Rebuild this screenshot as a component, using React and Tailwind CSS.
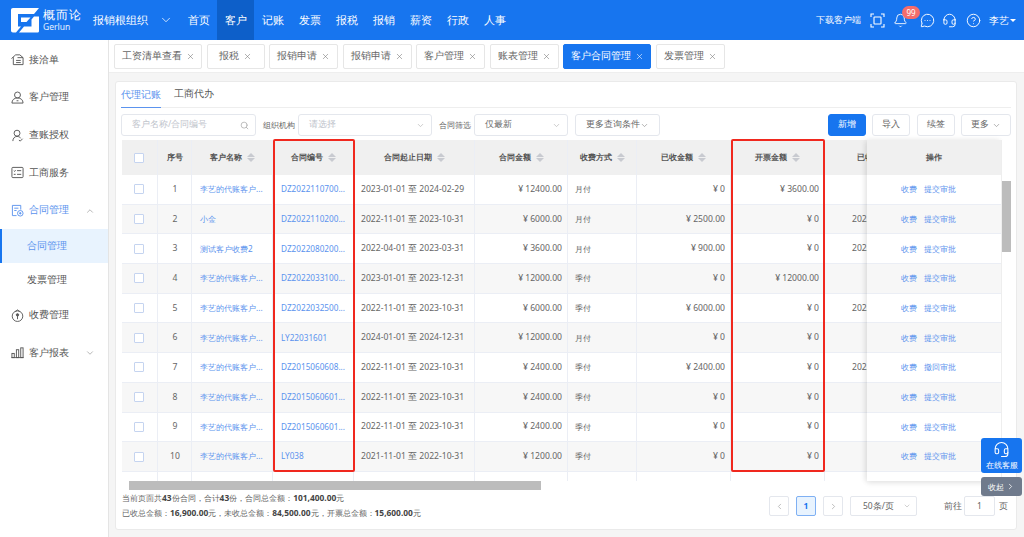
import React from "react";
import { X, ChevronDown, ChevronUp, ChevronLeft, ChevronRight, Search, Bell, Headset, CircleHelp, MessageCircleMore } from "lucide-react";

const FONT = "font-['Open_Sans','Noto_Sans_CJK_SC',sans-serif]";

function Logo() {
  return (
    <svg width="28" height="25" viewBox="0 0 28 25" className="shrink-0">
      <path d="M2 0H28L23 6H7V18.5H10L5 24.5H2C0.8 24.5 0 23.7 0 22.5V2C0 0.8 0.8 0 2 0Z" fill="#fff" />
      <path d="M10 9.5H19.5L15.5 14H10Z" fill="#fff" />
      <path d="M23 8.5H28V23C28 24 27.2 24.6 26.4 24.6H8L13 18.5H20.5V11.5Z" fill="#fff" />
    </svg>
  );
}

function ScanIcon() {
  return (
    <svg width="15" height="15" viewBox="0 0 15 15" fill="none" stroke="#fff" strokeWidth="1.1" className="shrink-0">
      <path d="M1 4V1H4M11 1H14V4M14 11V14H11M4 14H1V11" />
      <rect x="4" y="4" width="7" height="7" rx="0.6" />
    </svg>
  );
}

function TopNav() {
  const items = ["首页", "客户", "记账", "发票", "报税", "报销", "薪资", "行政", "人事"];
  return (
    <header className="h-10 bg-[#1775ef] flex items-center text-white shrink-0">
      <div className="w-[93px] pl-[11px] flex items-center gap-[4px] shrink-0">
        <Logo />
        <div className="flex flex-col leading-none">
          <span className="text-[12px] leading-[14px] tracking-[1px] whitespace-nowrap">概而论</span>
          <span className="text-[8.5px] leading-[10px] text-white/90">Gerlun</span>
        </div>
      </div>
      <span className="text-[11px] w-[54px] whitespace-nowrap">报销根组织</span>
      <ChevronDown className="w-[14px] h-[14px] ml-[12px] mr-[7px] shrink-0" strokeWidth={1.3} />
      <nav className="flex h-full">
        {items.map((t) => (
          <div key={t} className={`w-[37px] h-full flex items-center justify-center text-[11px] ${t === "客户" ? "bg-[#0d5fc9]" : ""}`}>
            {t}
          </div>
        ))}
      </nav>
      <div className="ml-auto flex items-center pr-[8px] mt-[1px]">
        <span className="text-[9.4px] mr-[9px] whitespace-nowrap">下载客户端</span>
        <ScanIcon />
        <div className="relative ml-[8px]">
          <Bell className="w-[15px] h-[15px]" strokeWidth={1.4} />
          <span className="absolute -top-[7px] left-[9px] w-[18px] h-[13px] rounded-full bg-[#f56c6c] text-[8px] leading-[13px] text-center">99</span>
        </div>
        <MessageCircleMore className="w-[15px] h-[15px] ml-[12px]" strokeWidth={1.5} />
        <Headset className="w-[15px] h-[15px] ml-[7px]" strokeWidth={1.5} />
        <CircleHelp className="w-[15px] h-[15px] ml-[9px]" strokeWidth={1.5} />
        <span className="text-[10px] ml-[8px] whitespace-nowrap">李艺</span>
        <span className="ml-[1px] w-0 h-0 border-x-[3px] border-x-transparent border-t-[3px] border-t-white" />
      </div>
    </header>
  );
}

function SideIcon({ kind, active }) {
  const c = active ? "#5b93ee" : "#555";
  const common = { width: 13, height: 13, viewBox: "0 0 14 14", fill: "none", stroke: c, strokeWidth: 1, className: "shrink-0" };
  if (kind === "home")
    return (
      <svg {...common}><path d="M0.5 6L5 2H9.5L13 5" /><path d="M2.5 4.5V12.5H13V5H7" /><path d="M5.5 8H10.5M5.5 10.3H10.5" /></svg>
    );
  if (kind === "user")
    return (
      <svg {...common}><circle cx="7" cy="4.3" r="3.2" /><path d="M1 13C1 9.5 3.5 7.5 7 7.5S13 9.5 13 13Z" /><path d="M6 10.5H8" /></svg>
    );
  if (kind === "auth")
    return (
      <svg {...common}><circle cx="6.5" cy="4.5" r="3.2" /><path d="M2 13C2 10 4 8 6.5 8C8.5 8 10 9 10.5 10" /><path d="M8.5 12L10 13L12.5 10.5" /></svg>
    );
  if (kind === "biz")
    return (
      <svg {...common}><rect x="1" y="1.5" width="12" height="11" rx="1" /><path d="M6.5 5H11M6.5 9H11" /><path d="M3 5L4 5.8L5 4.6M3 9H5" /></svg>
    );
  if (kind === "contract")
    return (
      <svg {...common}><path d="M10.5 6V1.5H1.5V12.5H6" /><path d="M3.5 4.5H8M3.5 7H6" /><circle cx="10" cy="10" r="3" /><circle cx="10" cy="10" r="0.8" fill={c} /></svg>
    );
  if (kind === "fee")
    return (
      <svg {...common}><circle cx="7" cy="7.7" r="5.7" /><path d="M4.5 3L7 1L9.5 3" /><circle cx="7" cy="6.3" r="1.3" fill={c} /><path d="M7 7.5V11" /></svg>
    );
  return (
    <svg {...common}><path d="M0.5 12.5H13.5" /><rect x="1" y="8" width="2.5" height="4.5" /><rect x="5.8" y="4" width="2.5" height="8.5" /><rect x="10.5" y="2" width="2.5" height="10.5" /></svg>
  );
}

function Sidebar() {
  const Row = ({ icon, label, arrow, active }) => (
    <div className={`h-[37.7px] flex items-center pl-[10.5px] pr-[13px] text-[9.5px] ${active ? "text-[#5b93ee]" : "text-[#555]"}`}>
      <SideIcon kind={icon} active={active} />
      <span className="ml-[5.5px]">{label}</span>
      {arrow === "up" && <ChevronUp className="ml-auto w-[10px] h-[10px] text-[#aaa]" />}
      {arrow === "down" && <ChevronDown className="ml-auto w-[10px] h-[10px] text-[#aaa]" />}
    </div>
  );
  return (
    <aside className="w-[109px] shrink-0 bg-white border-r border-[#e4e4e4] pt-[1px] flex flex-col">
      <Row icon="home" label="接洽单" />
      <Row icon="user" label="客户管理" />
      <Row icon="auth" label="查账授权" />
      <Row icon="biz" label="工商服务" />
      <Row icon="contract" label="合同管理" arrow="up" active />
      <div className="h-[34px] flex items-center pl-[25px] text-[9.5px] text-[#5b93ee] bg-[#e8f3fe] border-l-2 border-[#1775ef]">合同管理</div>
      <div className="h-[33px] flex items-center pl-[27px] text-[9.5px] text-[#555]">发票管理</div>
      <Row icon="fee" label="收费管理" />
      <Row icon="report" label="客户报表" arrow="down" />
    </aside>
  );
}

function Tabs() {
  const tabs = [
    ["工资清单查看", "w-[88px]"],
    ["报税", "w-[58px]"],
    ["报销申请", "w-[69px]"],
    ["报销申请", "w-[69px]"],
    ["客户管理", "w-[69px]"],
    ["账表管理", "w-[69px]"],
    ["客户合同管理", "w-[88px]", true],
    ["发票管理", "w-[69px]"],
  ];
  return (
    <div className="h-[33px] bg-white flex items-center gap-[4.5px] pl-[5px] shrink-0 border-b border-[#eee]">
      {tabs.map(([t, w, on], i) => (
        <div key={i} className={`${w} h-[25px] mt-[1px] flex items-center justify-center gap-[4px] rounded-[2px] border text-[9.6px] whitespace-nowrap ${on ? "bg-[#1775ef] border-[#1775ef] text-white" : "bg-white border-[#e6e6e6] text-[#666]"}`}>
          {t}
          <X className={`w-[9px] h-[9px] ${on ? "text-white" : "text-[#777]"}`} strokeWidth={1.5} />
        </div>
      ))}
    </div>
  );
}

function Box({ className = "", children }) {
  return <div className={`h-[22px] rounded-[3px] border border-[#e4e7ed] bg-white flex items-center text-[8.8px] whitespace-nowrap shrink-0 ${className}`}>{children}</div>;
}

function Toolbar() {
  return (
    <div className="flex items-center mt-[6px] h-[22px] -mx-[1px]">
      <Box className="w-[135px] pl-[10px] pr-[3px] text-[#c0c4cc] justify-between">
        客户名称/合同编号
        <Search className="w-[9px] h-[9px] mr-[3px] text-[#aaa]" />
      </Box>
      <span className="ml-[7px] text-[8.2px] text-[#666] whitespace-nowrap w-[35px]">组织机构</span>
      <Box className="w-[134px] pl-[10px] pr-[6px] text-[#c0c4cc] justify-between">
        请选择
        <ChevronDown className="w-[9px] h-[9px] text-[#bbb]" />
      </Box>
      <span className="ml-[7px] text-[8.2px] text-[#666] whitespace-nowrap w-[35px]">合同筛选</span>
      <Box className="w-[94px] pl-[10px] pr-[6px] text-[#666] justify-between">
        仅最新
        <ChevronDown className="w-[9px] h-[9px] text-[#bbb]" />
      </Box>
      <Box className="w-[85px] ml-[7px] px-[10px] text-[#666] justify-between">
        更多查询条件
        <ChevronDown className="w-[9px] h-[9px] text-[#999]" />
      </Box>
      <Box className="ml-auto w-[38px] justify-center !bg-[#1775ef] !border-[#1775ef] text-white">新增</Box>
      <Box className="ml-[6px] w-[38px] justify-center text-[#666]">导入</Box>
      <Box className="ml-[7px] w-[38px] justify-center text-[#666]">续签</Box>
      <Box className="ml-[6px] w-[50px] justify-center gap-[3px] text-[#666]">
        更多
        <ChevronDown className="w-[9px] h-[9px] text-[#999]" />
      </Box>
    </div>
  );
}

const GRID = "grid grid-cols-[36px_34px_81px_81px_121px_93px_69px_94px_94px_160px]";
const CELL = "border-r border-[#ebeef5] h-full flex items-center overflow-hidden whitespace-nowrap";
const LINK = "pl-[8px] text-[8.2px] text-[#5b93ee]";
const D1 = "李艺的代账客户...";
const rows = [
  [D1, "DZ2022110700...", "2023-01-01 至 2024-02-29", "12400.00", "月付", "0", "3600.00", ""],
  ["小金", "DZ2022110200...", "2022-11-01 至 2023-10-31", "6000.00", "月付", "2500.00", "0", "2022-11-01"],
  ["测试客户收费2", "DZ2022080200...", "2022-04-01 至 2023-03-31", "3600.00", "月付", "900.00", "0", "2022-08-01"],
  [D1, "DZ2022033100...", "2023-01-01 至 2023-12-31", "12000.00", "季付", "0", "12000.00", ""],
  [D1, "DZ2022032500...", "2022-11-01 至 2023-10-31", "6000.00", "季付", "6000.00", "0", "2022-03-25"],
  [D1, "LY22031601", "2024-01-01 至 2024-12-31", "12000.00", "月付", "0", "0", ""],
  [D1, "DZ2015060608...", "2022-11-01 至 2023-10-31", "2400.00", "季付", "2400.00", "0", "2022-11-01"],
  [D1, "DZ2015060601...", "2022-11-01 至 2023-10-31", "2400.00", "季付", "0", "0", ""],
  [D1, "DZ2015060601...", "2022-11-01 至 2023-10-31", "2400.00", "季付", "0", "0", ""],
  [D1, "LY038", "2021-11-01 至 2022-10-31", "1200.00", "季付", "0", "0", ""],
];

function Sort() {
  return (
    <span className="inline-flex flex-col gap-[1px] ml-[5px]">
      <span className="w-0 h-0 border-x-[4px] border-x-transparent border-b-[4px] border-b-[#c8cad0]" />
      <span className="w-0 h-0 border-x-[4px] border-x-transparent border-t-[4px] border-t-[#c8cad0]" />
    </span>
  );
}

function Check() {
  return <span className="w-[10px] h-[10px] -ml-[1px] rounded-[1px] border border-[#c5d4f0] bg-white" />;
}

function Table() {
  const heads = ["客户名称", "合同编号", "合同起止日期", "合同金额", "收费方式", "已收金额", "开票金额"];
  return (
    <div className="relative mt-[4px] h-[350px]">
      <div className="w-[888px] h-[341px] overflow-hidden">
        <div className={`${GRID} h-[35px] bg-[#f0f0f0] text-[8.4px] font-semibold text-[#555]`}>
          <div className={`${CELL} justify-center`}><Check /></div>
          <div className={`${CELL} justify-center`}>序号</div>
          {heads.map((h) => (
            <div key={h} className={`${CELL} justify-center`}>{h}<Sort /></div>
          ))}
          <div className={`${CELL} pl-[32px]`}>已收日期</div>
        </div>
        {rows.map((r, i) => (
          <div key={i} className={`${GRID} h-[29.7px] border-b border-[#ebeef5] text-[8.6px] text-[#666] ${i % 2 ? "bg-[#f7f7f7]" : "bg-white"}`}>
            <div className={`${CELL} justify-center`}><Check /></div>
            <div className={`${CELL} justify-center pl-[1px]`}>{i + 1}</div>
            <div className={`${CELL} ${LINK}`}>{r[0]}</div>
            <div className={`${CELL} ${LINK}`}>{r[1]}</div>
            <div className={`${CELL} pl-[7px]`}>{r[2]}</div>
            <div className={`${CELL} justify-end pr-[5px]`}>¥ {r[3]}</div>
            <div className={`${CELL} pl-[7px] text-[8.2px]`}>{r[4]}</div>
            <div className={`${CELL} justify-end pr-[5px]`}>¥ {r[5]}</div>
            <div className={`${CELL} justify-end pr-[5px]`}>¥ {r[6]}</div>
            <div className={`${CELL} pl-[27px]`}>{r[7]}</div>
          </div>
        ))}
        <div className={`${GRID} h-[9px]`}>
          {Array.from({ length: 10 }).map((_, i) => <div key={i} className="border-r border-[#ebeef5]" />)}
        </div>
      </div>

      {/* horizontal scrollbar */}
      <div className="absolute left-[7px] top-[341px] h-[9px] bg-[#bcbcbc] w-[412px]" />

      {/* fixed operation column */}
      <div className="absolute left-[745px] top-0 w-[134px] h-[341px] bg-white shadow-[-2px_0_6px_rgba(0,0,0,0.08),0_2px_6px_rgba(0,0,0,0.08)]">
        <div className="h-[35px] bg-[#f0f0f0] flex items-center justify-center text-[8.4px] font-semibold text-[#555]">操作</div>
        {rows.map((r, i) => (
          <div key={i} className={`h-[29.7px] border-b border-[#ebeef5] flex items-center pl-[34px] gap-[7px] text-[8.2px] text-[#5b93ee] ${i % 2 ? "bg-[#f7f7f7]" : "bg-white"}`}>
            <span>收费</span>
            <span>{i === 6 ? "撤回审批" : "提交审批"}</span>
          </div>
        ))}
      </div>

      {/* vertical scrollbar */}
      <div className="absolute left-[879px] top-0 w-[9px] h-[341px] bg-white border-l border-[#eee]">
        <div className="mt-[41px] w-[9px] h-[71px] bg-[#bcbcbc]" />
      </div>

      {/* red highlight frames */}
      <div className="absolute left-[151px] -top-[1px] w-[82px] h-[333px] border-[2px] border-[#f0281e] rounded-[2px]" />
      <div className="absolute left-[609px] -top-[1px] w-[94px] h-[333px] border-[2px] border-[#f0281e] rounded-[2px]" />
    </div>
  );
}

function Footer() {
  return (
    <div className="flex items-start">
      <div className="text-[8.4px] text-[#666] leading-[15px] whitespace-nowrap">
        <div>当前页面共<b className="text-[#444]">43</b>份合同，合计<b className="text-[#444]">43</b>份，合同总金额：<b className="text-[#444]">101,400.00</b>元</div>
        <div>已收总金额：<b className="text-[#444]">16,900.00</b>元，未收总金额：<b className="text-[#444]">84,500.00</b>元，开票总金额：<b className="text-[#444]">15,600.00</b>元</div>
      </div>
      <div className="ml-auto flex items-center mt-[6px] mr-[3px] text-[8.5px] text-[#666]">
        <span className="w-[20px] h-[20px] rounded-[2px] border border-[#e4e7ed] flex items-center justify-center"><ChevronLeft className="w-[9px] h-[9px] text-[#aaa]" /></span>
        <span className="ml-[7px] w-[20px] h-[20px] rounded-[2px] border border-[#7fb0f3] bg-[#e8f3fe] text-[#1775ef] font-bold flex items-center justify-center">1</span>
        <span className="ml-[7px] w-[20px] h-[20px] rounded-[2px] border border-[#e4e7ed] flex items-center justify-center"><ChevronRight className="w-[9px] h-[9px] text-[#aaa]" /></span>
        <span className="ml-[7px] w-[67px] h-[20px] rounded-[2px] border border-[#e4e7ed] flex items-center justify-between pl-[12px] pr-[5px]">50条/页<ChevronDown className="w-[8px] h-[8px] text-[#bbb]" /></span>
        <span className="ml-[27px] w-[17px] whitespace-nowrap">前往</span>
        <span className="ml-[3px] w-[31px] h-[20px] rounded-[2px] border border-[#e4e7ed] flex items-center justify-center">1</span>
        <span className="ml-[4px] w-[8px]">页</span>
      </div>
    </div>
  );
}

export default function App() {
  return (
    <div className={`relative w-[1024px] h-[537px] overflow-hidden flex flex-col bg-[#f5f5f5] ${FONT}`}>
      <TopNav />
      <div className="flex flex-1 min-h-0">
        <Sidebar />
        <main className="flex-1 min-w-0 flex flex-col">
          <Tabs />
          <section className="mt-[8px] ml-[6px] mr-[7px] h-[449px] bg-white rounded-[3px] border border-[#eaeaea] px-[6px]">
            <div className="h-[26px] flex border-b border-[#eee] text-[9.7px] text-[#555] items-end -mx-[1px] whitespace-nowrap">
              <div className="h-full flex items-center text-[#5b93ee] border-b border-[#5b93ee] -mb-[1px]">代理记账</div>
              <div className="h-full flex items-center ml-[13px]">工商代办</div>
            </div>
            <Toolbar />
            <Table />
            <Footer />
          </section>
        </main>
      </div>
      {/* floating service widget */}
      <div className="absolute left-[981px] top-[438px] w-[41px] flex flex-col gap-[4px] text-white">
        <div className="h-[35px] rounded-[3px] bg-[#1775ef] flex flex-col items-center justify-center">
          <Headset className="w-[17px] h-[17px]" strokeWidth={1.5} />
          <span className="whitespace-nowrap text-[8px] leading-[11px] mt-[1px]">在线客服</span>
        </div>
        <div className="h-[19px] rounded-[3px] bg-[#6f7a8c] flex items-center justify-center gap-[2px] text-[8px]">
          收起<ChevronRight className="w-[9px] h-[9px]" />
        </div>
      </div>
    </div>
  );
}
